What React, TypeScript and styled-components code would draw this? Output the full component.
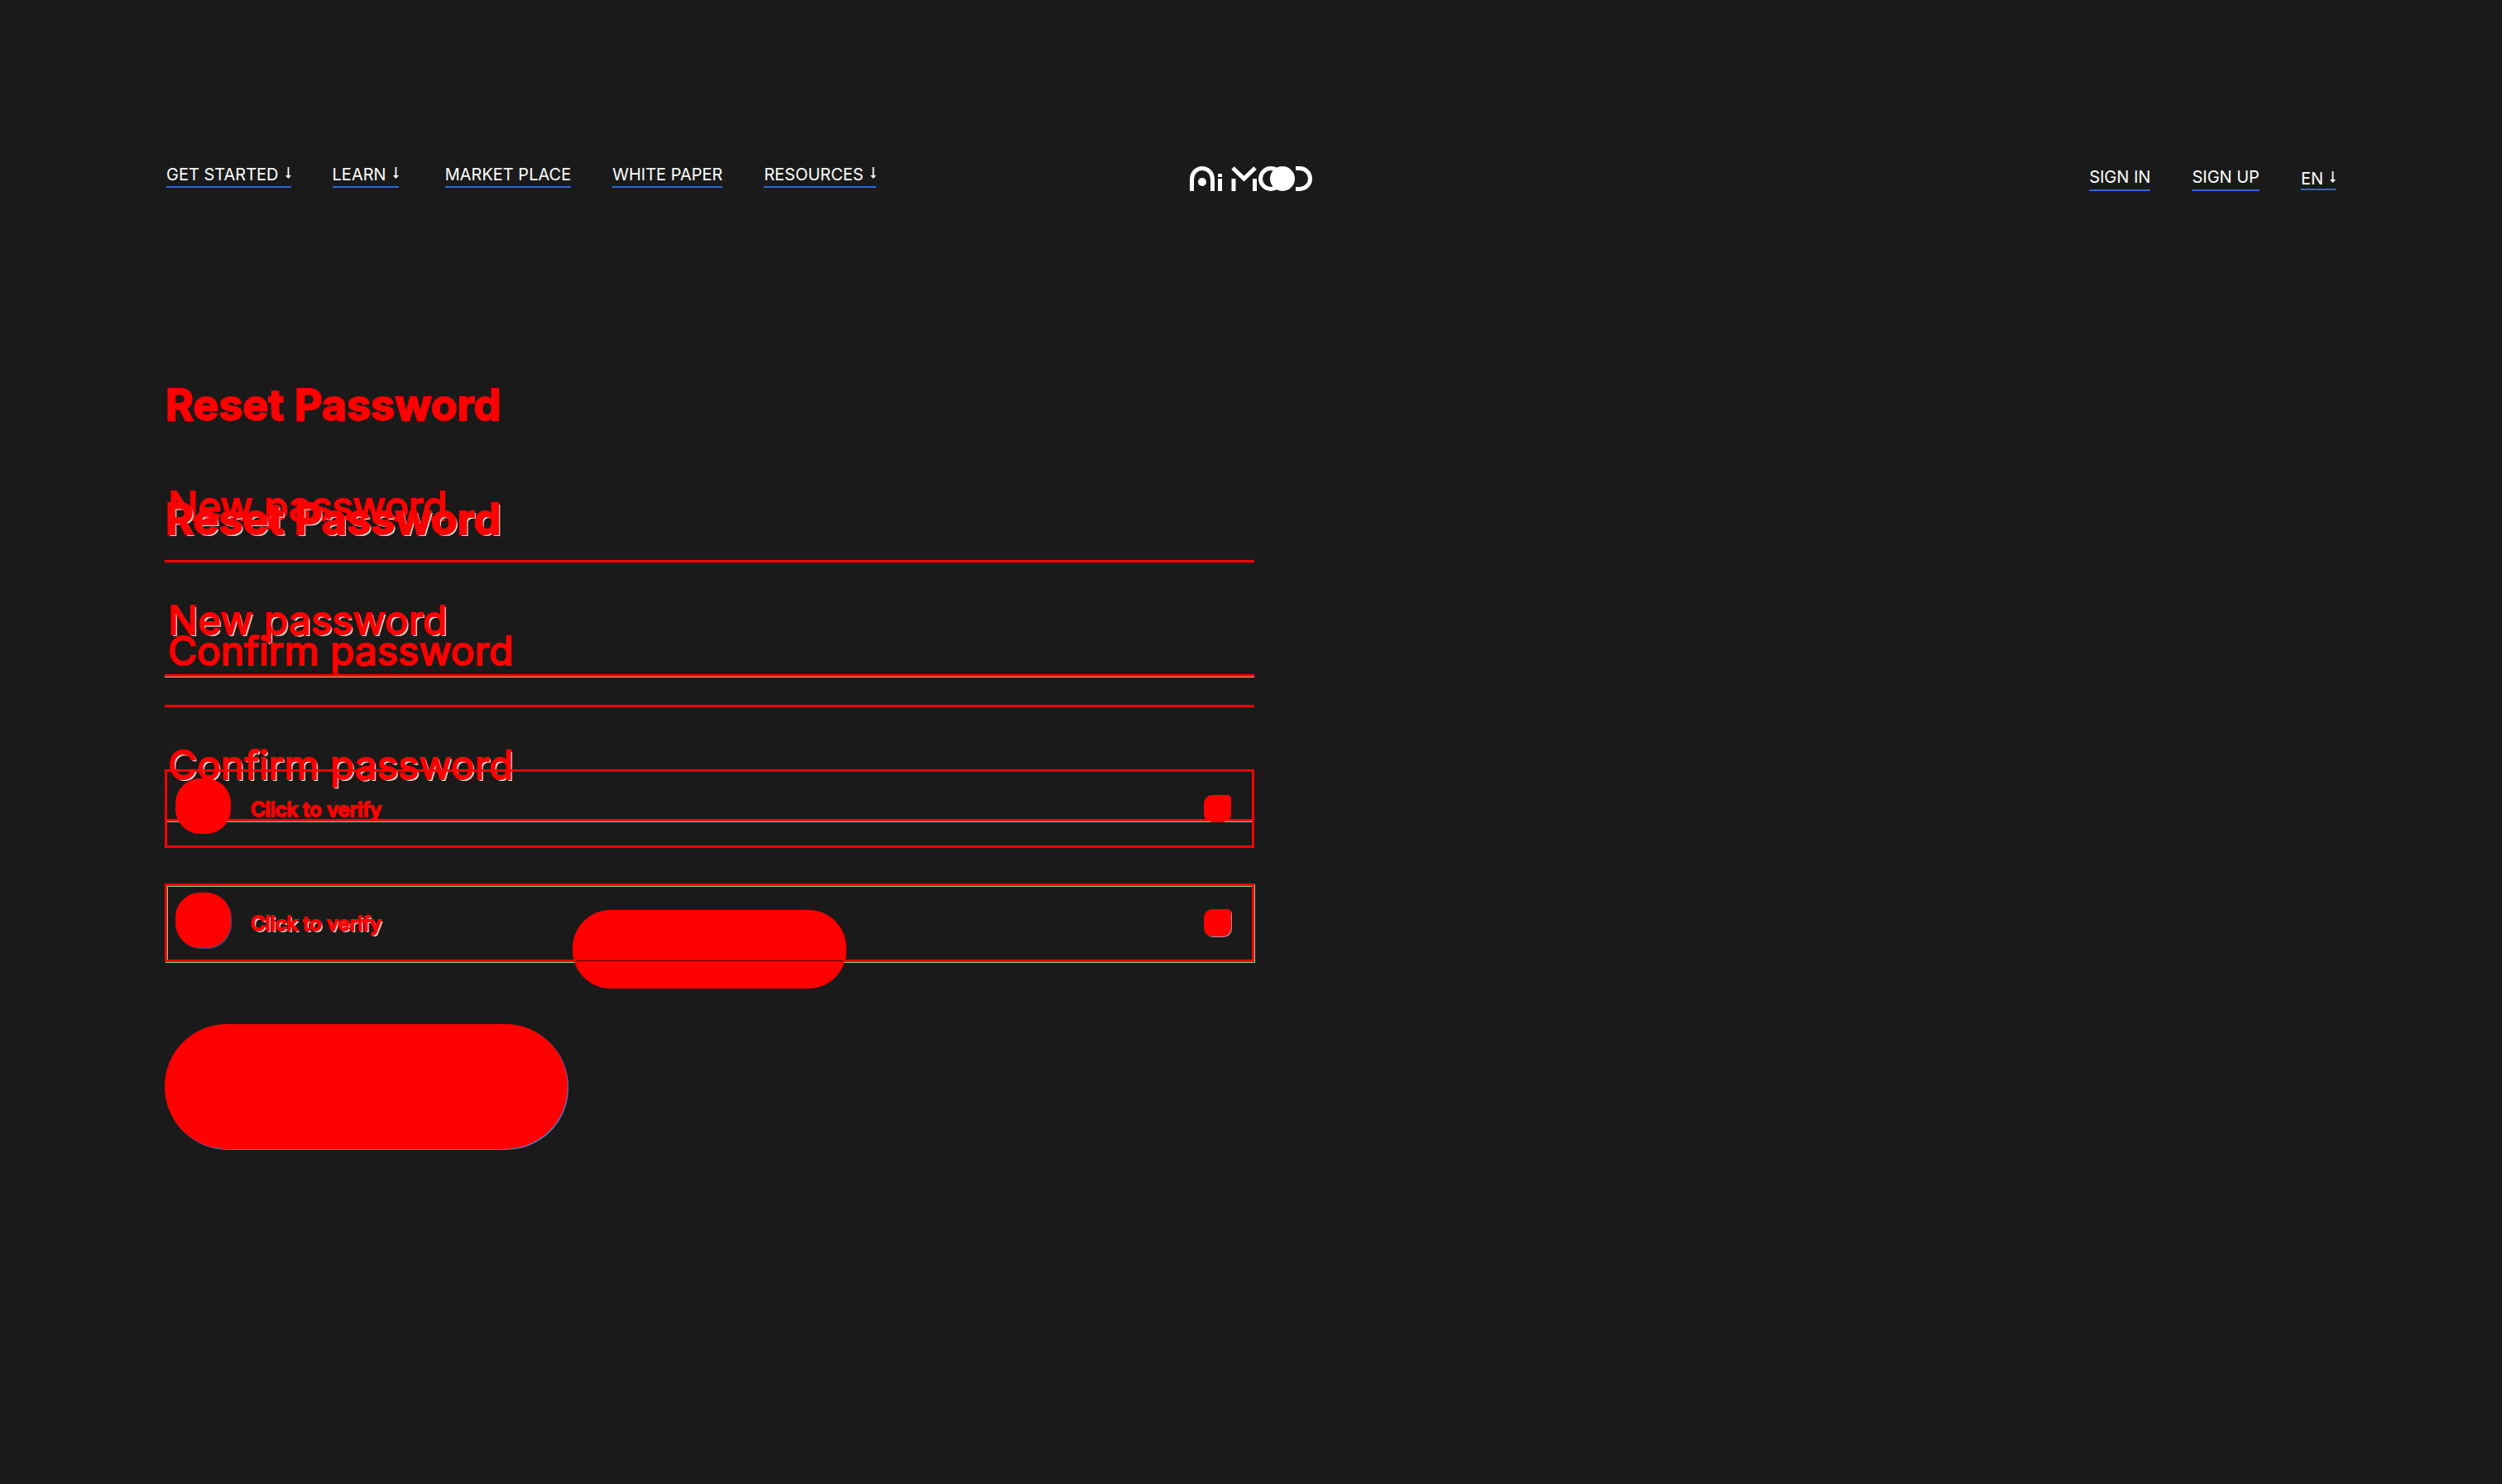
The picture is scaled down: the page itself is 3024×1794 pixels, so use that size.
import React from 'react';
import styled, { createGlobalStyle, css } from 'styled-components';

const red = '#ff0000';
const green = '#7fdca4';

const Global = createGlobalStyle`
  * { box-sizing: border-box; }
  body { margin: 0; background: #1a1a1a; font-family: Inter, "Liberation Sans", sans-serif; }
  button, input { font-family: inherit; }
`;

const Page = styled.div`
  min-height: 100vh;
  padding: 196px 200px 100px;
  background: #1a1a1a;
`;

const Header = styled.header`
  display: grid;
  grid-template-columns: 1fr auto 1fr;
  align-items: start;
  padding: 0 1px;
`;

const Nav = styled.nav<{ $end?: boolean }>`
  display: flex;
  gap: 50px;
  padding-top: ${(p) => (p.$end ? 4 : 0)}px;
  justify-content: ${(p) => (p.$end ? 'flex-end' : 'flex-start')};
`;

const NavLink = styled.a<{ $plain?: boolean }>`
  display: flex;
  gap: 8px;
  height: 31px;
  padding-top: ${(p) => (p.$plain ? 2 : 3)}px;
  color: #fff;
  font-size: 20px;
  line-height: 24px;
  white-space: nowrap;
  text-decoration: none;
  border-bottom: 2px solid #2f66dd;
`;

const LangLink = styled(NavLink)`
  height: 30px;
  padding-top: 4px;
`;

const Wide = styled.span`
  display: flex;
  padding-right: 6px;
`;

const Arrow = styled.svg`
  width: 7px;
  height: 14px;
  margin-top: 3px;
`;

const Logo = styled.svg`
  display: block;
  width: 148px;
  height: 30px;
  margin-top: 5px;
`;

const Layers = styled.main`
  display: grid;
  width: 1317px;
  max-width: 100%;
  margin: 227px 0 0 -1px;
`;

const Form = styled.form<{ $edge?: boolean }>`
  grid-area: 1 / 1;
  padding-top: ${(p) => (p.$edge ? 138 : 0)}px;
`;

const inked = css<{ $edge?: boolean }>`
  color: ${red};
  -webkit-text-stroke: 2px ${red};
  text-shadow: ${(p) => (p.$edge ? '2px 2px 0 #f0f0f0' : 'none')};
`;

const Title = styled.h1<{ $edge?: boolean }>`
  position: relative;
  z-index: 1;
  margin: 0;
  padding-left: 1px;
  font-size: 52px;
  font-weight: 700;
  line-height: 64px;
  ${inked}
`;

const Field = styled.input<{ $edge?: boolean; $first?: boolean }>`
  display: block;
  width: 100%;
  height: ${(p) => (p.$first ? 158 : 175)}px;
  margin: 0;
  padding: ${(p) => (p.$first ? 24 : 40)}px 0 0 4px;
  border: 0;
  border-bottom: 3px solid ${red};
  border-radius: 0;
  outline: 0;
  background: transparent;
  box-shadow: ${(p) => (p.$edge ? `0 1px 0 ${green}` : 'none')};
  font-size: 48px;
  &::placeholder { opacity: 1; ${inked} }
`;

const Verify = styled.button<{ $edge?: boolean }>`
  display: flex;
  align-items: center;
  width: 100%;
  height: 95px;
  margin-top: 75px;
  padding: 0 25px 0 10px;
  border: 3px solid ${red};
  background: transparent;
  box-shadow: ${(p) => (p.$edge ? `1px 1px 0 ${green}, inset 1px 1px 0 ${green}` : 'none')};
`;

const Dot = styled.span<{ $edge?: boolean }>`
  width: 67px;
  height: 67px;
  margin-bottom: 6px;
  border-radius: 30px;
  background: ${red};
  box-shadow: ${(p) => (p.$edge ? '1px 1px 0 #34507f' : 'none')};
`;

const VerifyText = styled.span<{ $edge?: boolean }>`
  flex: 1;
  padding: 2px 0 0 24px;
  font-size: 24px;
  font-weight: 500;
  line-height: 30px;
  text-align: left;
  ${inked}
`;

const Mark = styled.span<{ $edge?: boolean }>`
  width: 33px;
  height: 33px;
  border-radius: 10px 5px 10px 10px;
  background: ${red};
  box-shadow: ${(p) => (p.$edge ? '1px 1px 0 #999' : 'none')};
`;

const Pill = styled.button`
  display: block;
  width: 331px;
  height: 95px;
  margin: 75px 0 0 493px;
  border: 0;
  border-radius: 46px;
  background: linear-gradient(#4a0d0d, #4a0d0d) center 61px / 323px 1px no-repeat ${red};
`;

const Submit = styled.button`
  display: block;
  width: 487px;
  height: 151px;
  margin-top: 75px;
  border: 0;
  border-radius: 75px;
  background: ${red};
  box-shadow: 1px 1px 0 #4a86d8;
`;

const Down = () => (
  <Arrow viewBox="0 0 7 14" aria-hidden="true">
    <path d="M2.6 0h1.8v10H7L3.5 14 0 10h2.6z" fill="#fff" />
  </Arrow>
);

function ResetForm({ edge = false }: { edge?: boolean }) {
  return (
    <Form $edge={edge} onSubmit={(e) => e.preventDefault()}>
      <Title $edge={edge}>Reset Password</Title>
      <Field $edge={edge} $first placeholder="New password" aria-label="New password" />
      <Field $edge={edge} placeholder="Confirm password" aria-label="Confirm password" />
      <Verify type="button" $edge={edge}>
        <Dot $edge={edge} />
        <VerifyText $edge={edge}>Click to verify</VerifyText>
        <Mark $edge={edge} />
      </Verify>
      {edge ? <Submit aria-label="Confirm" /> : <Pill aria-label="Confirm" />}
    </Form>
  );
}

export default function App() {
  return (
    <Page>
      <Global />
      <Header>
        <Nav>
          <NavLink href="#start">GET STARTED<Down /></NavLink>
          <Wide><NavLink href="#learn">LEARN<Down /></NavLink></Wide>
          <NavLink href="#market">MARKET PLACE</NavLink>
          <NavLink href="#paper">WHITE PAPER</NavLink>
          <NavLink href="#resources">RESOURCES<Down /></NavLink>
        </Nav>
        <Logo viewBox="0 0 148 30" role="img" aria-label="Ai Mood">
          <g fill="none" stroke="#fff" strokeWidth="5">
            <path d="M2.5 30V15.500a12.500 13 0 0 1 25 0V30" />
            <path d="M36.500 15v15M36.500 9v4M53 15v15M78.500 15v15" />
            <path d="M52 2l13.500 13L79 2" />
            <path d="M128 2.500h5a12.500 12.500 0 0 1 0 25h-5" />
            <circle cx="98" cy="15" r="12.500" />
          </g>
          <circle cx="15" cy="19" r="5" fill="#fff" />
          <circle cx="112" cy="15" r="15" fill="#fff" />
        </Logo>
        <Nav $end>
          <NavLink $plain href="#in">SIGN IN</NavLink>
          <NavLink $plain href="#up">SIGN UP</NavLink>
          <LangLink href="#en">EN<Down /></LangLink>
        </Nav>
      </Header>
      <Layers>
        <ResetForm edge />
        <ResetForm />
      </Layers>
    </Page>
  );
}
